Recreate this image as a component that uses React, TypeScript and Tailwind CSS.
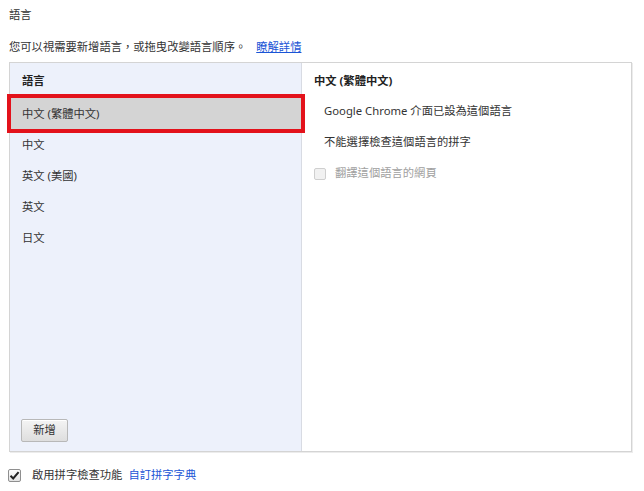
import React from "react";

const font = { fontFamily: "'Noto Sans', 'Noto Sans CJK TC', sans-serif" };

function CheckedBox() {
  return (
    <span className="inline-flex h-[13px] w-[13px] items-center justify-center rounded-[2px] border border-[#8f8f8f] bg-gradient-to-b from-[#fdfdfd] to-[#e3e3e3]">
      <svg width="11" height="11" viewBox="0 0 11 11">
        <path d="M1.5 5.8 L4.2 8.5 L9.6 2.2" fill="none" stroke="#222" strokeWidth="2" />
      </svg>
    </span>
  );
}

export default function App() {
  const langs = ["中文", "英文 (美國)", "英文", "日文"];
  return (
    <div className="h-[491px] w-[644px] bg-white text-[11.3px] text-[#333]" style={font}>
      <div className="flex h-[30px] items-center pl-[9px] pt-[1px]">語言</div>
      <div className="flex h-[32px] items-center pl-[9px] pt-[2px]">
        <span>您可以視需要新增語言，或拖曳改變語言順序。</span>
        <a className="ml-[10px] text-[#1a55d6] underline">瞭解詳情</a>
      </div>
      <div className="ml-[9px] flex h-[390px] w-[623px] border border-[#d4d4d4] shadow-[1px_1px_0_#ececec]">
        <div className="flex w-[292px] flex-col border-r border-[#d8dbe3] bg-[#edf1fb]">
          <div className="flex h-[35px] items-center pl-[12px] pt-[2px] font-bold text-[#222]">語言</div>
          <div className="relative flex h-[31px] items-center bg-[#d4d4d4] pl-[12px] pt-[1px]">
            <span>中文 (繁體中文)</span>
            <div className="pointer-events-none absolute left-[-3px] right-[-4px] top-[-4px] bottom-[-4px] border-[4px] border-[#e3121b]" />
          </div>
          {langs.map((l) => (
            <div key={l} className="flex h-[31px] items-center pl-[12px] pt-[2px]">
              {l}
            </div>
          ))}
          <div className="flex-1" />
          <div className="pb-[9px] pl-[11px]">
            <button className="flex h-[23px] w-[47px] items-center justify-center rounded-[2px] border border-[#b8b8b8] bg-gradient-to-b from-[#f4f4f4] to-[#dedede] text-[#333] shadow-[0_1px_0_#fff_inset]">
              新增
            </button>
          </div>
        </div>
        <div className="flex flex-1 flex-col pl-[12px]">
          <div className="flex h-[33px] items-center pt-[4px] font-bold text-[#222]">中文 (繁體中文)</div>
          <div className="flex h-[31px] items-center pl-[10px]">Google Chrome 介面已設為這個語言</div>
          <div className="flex h-[31px] items-center pl-[10px]">不能選擇檢查這個語言的拼字</div>
          <div className="flex h-[31px] items-center text-[#a0a0a0]">
            <span className="inline-block h-[12px] w-[12px] rounded-[2px] border border-[#cfcfcf] bg-[#f1f1f1]" />
            <span className="ml-[9px]">翻譯這個語言的網頁</span>
          </div>
        </div>
      </div>
      <div className="mt-[15px] flex items-center pl-[8px]">
        <CheckedBox />
        <span className="ml-[11px]">啟用拼字檢查功能</span>
        <a className="ml-[6px] text-[#1a55d6]">自訂拼字字典</a>
      </div>
    </div>
  );
}
